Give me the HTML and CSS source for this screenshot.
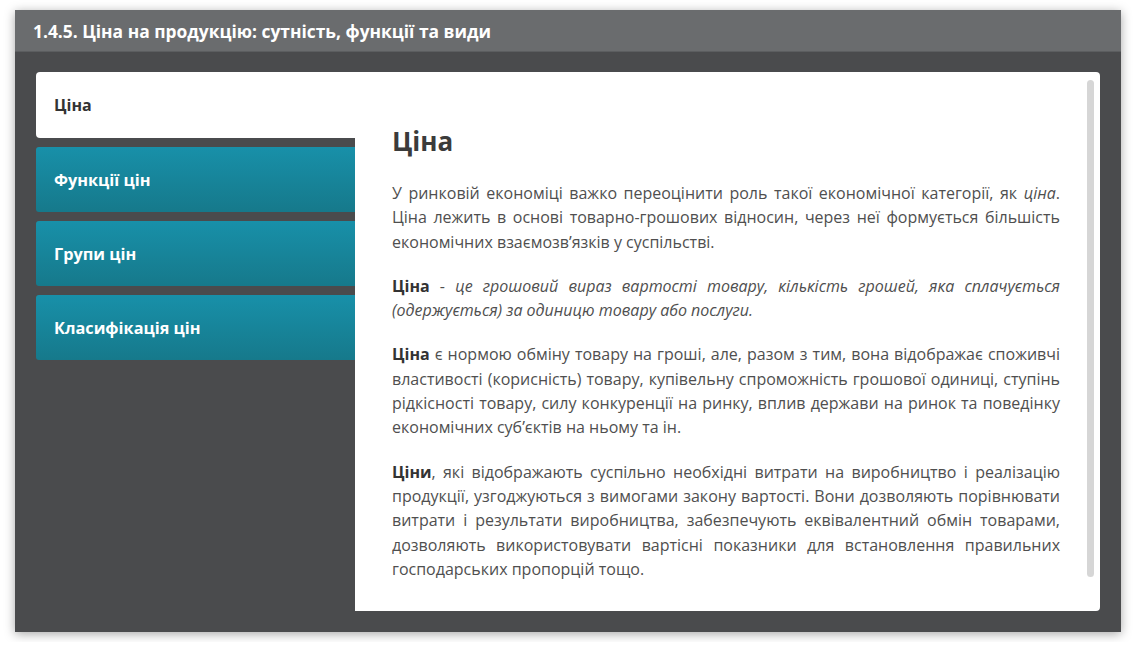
FILE: index.html
```html
<!DOCTYPE html>
<html lang="uk">
<head>
<meta charset="utf-8">
<title>Ціна на продукцію</title>
<link rel="stylesheet" href="styles.css">
</head>
<body>
<div class="frame">
  <div class="header">1.4.5. Ціна на продукцію: сутність, функції та види</div>
  <div class="main">
    <div class="tabs">
      <div class="tab active">Ціна</div>
      <div class="tab">Функції цін</div>
      <div class="tab">Групи цін</div>
      <div class="tab">Класифікація цін</div>
    </div>
    <div class="content">
      <h1 class="title">Ціна</h1>
      <p>У ринковій економіці важко переоцінити роль такої економічної категорії, як <em>ціна</em>. Ціна лежить в основі товарно-грошових відносин, через неї формується більшість економічних взаємозв’язків у суспільстві.</p>
      <p><strong>Ціна</strong> - <em>це грошовий вираз вартості товару, кількість грошей, яка сплачується (одержується) за одиницю товару або послуги.</em></p>
      <p><strong>Ціна</strong> є нормою обміну товару на гроші, але, разом з тим, вона відображає споживчі властивості (корисність) товару, купівельну спроможність грошової одиниці, ступінь рідкісності товару, силу конкуренції на ринку, вплив держави на ринок та поведінку економічних суб’єктів на ньому та ін.</p>
      <p><strong>Ціни</strong>, які відображають суспільно необхідні витрати на виробництво і реалізацію продукції, узгоджуються з вимогами закону вартості. Вони дозволяють порівнювати витрати і результати виробництва, забезпечують еквівалентний обмін товарами, дозволяють використовувати вартісні показники для встановлення правильних господарських пропорцій тощо.</p>
      <div class="scrollbar"></div>
    </div>
  </div>
</div>
</body>
</html>
```

FILE: styles.css
```css
html, body {
  margin: 0;
  padding: 0;
  background: #ffffff;
}
body {
  font-family: "Open Sans", "Noto Sans", sans-serif;
}
.frame {
  margin: 10px 15px;
  width: 1106px;
  height: 622px;
  background: #4a4b4d;
  box-shadow: 0 2px 10px rgba(0, 0, 0, 0.35);
  display: flex;
  flex-direction: column;
}
.header {
  height: 42px;
  flex: none;
  background: #6a6c6e;
  color: #ffffff;
  font-weight: 700;
  font-size: 17.4px;
  line-height: 42px;
  padding-left: 18px;
  border-bottom: 1px solid #5c5e60;
  box-sizing: border-box;
}
.main {
  flex: 1;
  display: flex;
  padding: 20px 21px 21px 21px;
  min-height: 0;
}
.tabs {
  width: 319px;
  flex: none;
  display: flex;
  flex-direction: column;
  gap: 9px;
}
.tab {
  height: 65px;
  display: flex;
  align-items: center;
  padding-left: 18px;
  font-size: 16.3px;
  font-weight: 700;
  color: #ffffff;
  background: linear-gradient(to bottom, #1890a9, #16798b);
  border-radius: 3px 0 0 3px;
}
.tab.active {
  height: 66px;
  background: #ffffff;
  color: #333333;
  font-size: 16px;
  border-radius: 4px 0 0 4px;
}
.content {
  flex: 1;
  position: relative;
  background: #ffffff;
  border-radius: 0 4px 4px 0;
  padding: 54px 40px 0 37px;
  overflow: hidden;
  color: #4f4f4f;
}
.title {
  margin: 0 0 24px 0;
  font-size: 26px;
  line-height: 31px;
  font-weight: 700;
  color: #3b3b3b;
}
.content p {
  margin: 0 0 20px 0;
  font-size: 16px;
  line-height: 24.3px;
  text-align: justify;
}
.content strong {
  color: #333333;
  font-weight: 700;
}
.scrollbar {
  position: absolute;
  top: 8px;
  right: 6px;
  width: 7px;
  height: 497px;
  background: #d6d6d6;
  border-radius: 4px;
}
```
